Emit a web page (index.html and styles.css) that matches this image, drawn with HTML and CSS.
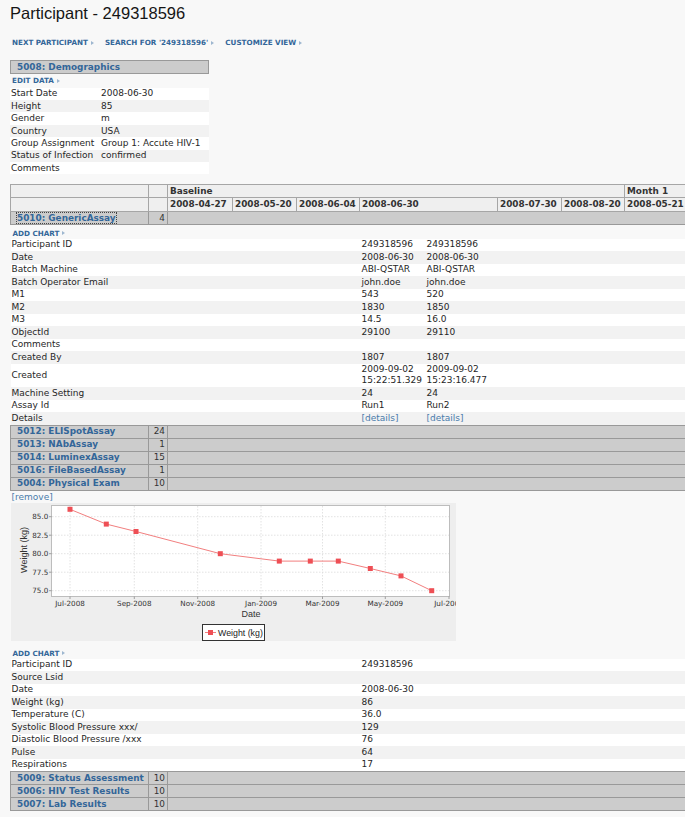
FILE: index.html
```html
<!DOCTYPE html>
<html lang="en">
<head>
<meta charset="utf-8">
<title>Participant - 249318596</title>
<link rel="stylesheet" href="styles.css">
</head>
<body>
<h1 class="page-title">Participant - 249318596</h1>

<div class="nav">
  <a class="tlink" href="#">Next Participant</a>
  <a class="tlink" href="#">Search for '249318596'</a>
  <a class="tlink" href="#">Customize View</a>
</div>

<div class="section-head"><a href="#">5008: Demographics</a></div>
<div class="action"><a class="tlink" href="#">Edit Data</a></div>
<table class="kv">
  <tr><td>Start Date</td><td>2008-06-30</td></tr>
  <tr><td>Height</td><td>85</td></tr>
  <tr><td>Gender</td><td>m</td></tr>
  <tr><td>Country</td><td>USA</td></tr>
  <tr><td>Group Assignment</td><td>Group 1: Accute HIV-1</td></tr>
  <tr><td>Status of Infection</td><td>confirmed</td></tr>
  <tr><td>Comments</td><td></td></tr>
</table>

<div class="clip">
<table class="grid">
  <colgroup>
    <col class="c-name"><col class="c-count">
    <col class="c-d1"><col class="c-d2"><col class="c-d3">
    <col class="c-d4a"><col class="c-d4b">
    <col class="c-d5"><col class="c-d6"><col class="c-d7">
  </colgroup>
  <thead>
    <tr>
      <th></th><th></th><th colspan="7">Baseline</th><th>Month 1</th>
    </tr>
    <tr>
      <th></th><th></th>
      <th>2008-04-27</th><th>2008-05-20</th><th>2008-06-04</th>
      <th colspan="2">2008-06-30</th>
      <th>2008-07-30</th><th>2008-08-20</th><th>2008-05-21</th>
    </tr>
  </thead>
  <tbody class="grp">
    <tr><td class="gname"><a class="focus" href="#">5010: GenericAssay</a></td><td class="count">4</td><td colspan="8"></td></tr>
  </tbody>
  <tbody class="act">
    <tr><td colspan="10"><a class="tlink" href="#">Add Chart</a></td></tr>
  </tbody>
  <tbody class="data">
    <tr><td colspan="5" class="label">Participant ID</td><td>249318596</td><td>249318596</td><td colspan="3"></td></tr>
    <tr><td colspan="5" class="label">Date</td><td>2008-06-30</td><td>2008-06-30</td><td colspan="3"></td></tr>
    <tr><td colspan="5" class="label">Batch Machine</td><td>ABI-QSTAR</td><td>ABI-QSTAR</td><td colspan="3"></td></tr>
    <tr><td colspan="5" class="label">Batch Operator Email</td><td>john.doe</td><td>john.doe</td><td colspan="3"></td></tr>
    <tr><td colspan="5" class="label">M1</td><td>543</td><td>520</td><td colspan="3"></td></tr>
    <tr><td colspan="5" class="label">M2</td><td>1830</td><td>1850</td><td colspan="3"></td></tr>
    <tr><td colspan="5" class="label">M3</td><td>14.5</td><td>16.0</td><td colspan="3"></td></tr>
    <tr><td colspan="5" class="label">ObjectId</td><td>29100</td><td>29110</td><td colspan="3"></td></tr>
    <tr><td colspan="5" class="label">Comments</td><td></td><td></td><td colspan="3"></td></tr>
    <tr><td colspan="5" class="label">Created By</td><td>1807</td><td>1807</td><td colspan="3"></td></tr>
    <tr><td colspan="5" class="label">Created</td><td>2009-09-02<br>15:22:51.329</td><td>2009-09-02<br>15:23:16.477</td><td colspan="3"></td></tr>
    <tr><td colspan="5" class="label">Machine Setting</td><td>24</td><td>24</td><td colspan="3"></td></tr>
    <tr><td colspan="5" class="label">Assay Id</td><td>Run1</td><td>Run2</td><td colspan="3"></td></tr>
    <tr><td colspan="5" class="label">Details</td><td><a class="plain" href="#">[details]</a></td><td><a class="plain" href="#">[details]</a></td><td colspan="3"></td></tr>
  </tbody>
  <tbody class="grp">
    <tr><td class="gname"><a href="#">5012: ELISpotAssay</a></td><td class="count">24</td><td colspan="8"></td></tr>
    <tr><td class="gname"><a href="#">5013: NAbAssay</a></td><td class="count">1</td><td colspan="8"></td></tr>
    <tr><td class="gname"><a href="#">5014: LuminexAssay</a></td><td class="count">15</td><td colspan="8"></td></tr>
    <tr><td class="gname"><a href="#">5016: FileBasedAssay</a></td><td class="count">1</td><td colspan="8"></td></tr>
    <tr><td class="gname"><a href="#">5004: Physical Exam</a></td><td class="count">10</td><td colspan="8"></td></tr>
  </tbody>
  <tbody class="remove">
    <tr><td colspan="10"><a class="plain" href="#">[remove]</a></td></tr>
  </tbody>
  <tbody class="chart-row">
    <tr><td colspan="10">
      <div class="chart">
        <svg width="445" height="138" viewBox="0 0 445 138">
          <rect x="0" y="0" width="445" height="138" fill="#eeeeee"/>
          <rect x="40.5" y="2.5" width="398" height="91" fill="#ffffff" stroke="#bdbdbd"/>
          <g stroke="#dadada" stroke-width="0.8" stroke-dasharray="1.5 1.5">
            <line x1="59" y1="3" x2="59" y2="93"/>
            <line x1="123.3" y1="3" x2="123.3" y2="93"/>
            <line x1="186.7" y1="3" x2="186.7" y2="93"/>
            <line x1="250" y1="3" x2="250" y2="93"/>
            <line x1="311.5" y1="3" x2="311.5" y2="93"/>
            <line x1="374.3" y1="3" x2="374.3" y2="93"/>
            <line x1="41" y1="13.7" x2="438" y2="13.7"/>
            <line x1="41" y1="32.2" x2="438" y2="32.2"/>
            <line x1="41" y1="50.7" x2="438" y2="50.7"/>
            <line x1="41" y1="69.2" x2="438" y2="69.2"/>
            <line x1="41" y1="87.7" x2="438" y2="87.7"/>
          </g>
          <g stroke="#8a8a8a" stroke-width="0.8">
            <line x1="59" y1="93.5" x2="59" y2="96"/>
            <line x1="123.3" y1="93.5" x2="123.3" y2="96"/>
            <line x1="186.7" y1="93.5" x2="186.7" y2="96"/>
            <line x1="250" y1="93.5" x2="250" y2="96"/>
            <line x1="311.5" y1="93.5" x2="311.5" y2="96"/>
            <line x1="374.3" y1="93.5" x2="374.3" y2="96"/>
            <line x1="438" y1="93.5" x2="438" y2="96"/>
            <line x1="38" y1="13.7" x2="40.5" y2="13.7"/>
            <line x1="38" y1="32.2" x2="40.5" y2="32.2"/>
            <line x1="38" y1="50.7" x2="40.5" y2="50.7"/>
            <line x1="38" y1="69.2" x2="40.5" y2="69.2"/>
            <line x1="38" y1="87.7" x2="40.5" y2="87.7"/>
          </g>
          <polyline fill="none" stroke="#f27f7f" stroke-width="1"
            points="59,6.3 95.3,21.1 125,28.5 209.3,50.7 268.3,58.1 299.3,58.1 327.3,58.1 359.3,65.5 390,72.9 420.7,87.7"/>
          <g fill="#ee4f55">
            <rect x="56.5" y="3.8" width="5" height="5"/>
            <rect x="92.8" y="18.6" width="5" height="5"/>
            <rect x="122.5" y="26" width="5" height="5"/>
            <rect x="206.8" y="48.2" width="5" height="5"/>
            <rect x="265.8" y="55.6" width="5" height="5"/>
            <rect x="296.8" y="55.6" width="5" height="5"/>
            <rect x="324.8" y="55.6" width="5" height="5"/>
            <rect x="356.8" y="63" width="5" height="5"/>
            <rect x="387.5" y="70.4" width="5" height="5"/>
            <rect x="418.2" y="85.2" width="5" height="5"/>
          </g>
          <g class="tick" text-anchor="end">
            <text x="37.3" y="16.2">85.0</text>
            <text x="37.3" y="34.7">82.5</text>
            <text x="37.3" y="53.2">80.0</text>
            <text x="37.3" y="71.7">77.5</text>
            <text x="37.3" y="90.2">75.0</text>
          </g>
          <g class="tick" text-anchor="middle">
            <text x="59" y="103">Jul-2008</text>
            <text x="123.3" y="103">Sep-2008</text>
            <text x="186.7" y="103">Nov-2008</text>
            <text x="250" y="103">Jan-2009</text>
            <text x="311.5" y="103">Mar-2009</text>
            <text x="374.3" y="103">May-2009</text>
            <text x="438" y="103">Jul-2009</text>
          </g>
          <text class="axis" x="240" y="114" text-anchor="middle">Date</text>
          <text class="axis" x="0" y="0" text-anchor="middle" transform="translate(15.5 47) rotate(-90)">Weight (kg)</text>
          <rect x="191.5" y="121.5" width="62" height="16" fill="#ffffff" stroke="#333333"/>
          <line x1="194" y1="129.5" x2="205" y2="129.5" stroke="#f27f7f"/>
          <rect x="197" y="127" width="5" height="5" fill="#ee4f55"/>
          <text class="legend" x="207" y="132.6">Weight (kg)</text>
        </svg>
      </div>
    </td></tr>
  </tbody>
  <tbody class="act act-gap">
    <tr><td colspan="10"><a class="tlink" href="#">Add Chart</a></td></tr>
  </tbody>
  <tbody class="data">
    <tr><td colspan="5" class="label">Participant ID</td><td>249318596</td><td colspan="4"></td></tr>
    <tr><td colspan="5" class="label">Source Lsid</td><td></td><td colspan="4"></td></tr>
    <tr><td colspan="5" class="label">Date</td><td>2008-06-30</td><td colspan="4"></td></tr>
    <tr><td colspan="5" class="label">Weight (kg)</td><td>86</td><td colspan="4"></td></tr>
    <tr><td colspan="5" class="label">Temperature (C)</td><td>36.0</td><td colspan="4"></td></tr>
    <tr><td colspan="5" class="label">Systolic Blood Pressure xxx/</td><td>129</td><td colspan="4"></td></tr>
    <tr><td colspan="5" class="label">Diastolic Blood Pressure /xxx</td><td>76</td><td colspan="4"></td></tr>
    <tr><td colspan="5" class="label">Pulse</td><td>64</td><td colspan="4"></td></tr>
    <tr><td colspan="5" class="label">Respirations</td><td>17</td><td colspan="4"></td></tr>
  </tbody>
  <tbody class="grp">
    <tr><td class="gname"><a href="#">5009: Status Assessment</a></td><td class="count">10</td><td colspan="8"></td></tr>
    <tr><td class="gname"><a href="#">5006: HIV Test Results</a></td><td class="count">10</td><td colspan="8"></td></tr>
    <tr><td class="gname"><a href="#">5007: Lab Results</a></td><td class="count">10</td><td colspan="8"></td></tr>
  </tbody>
</table>
</div>
</body>
</html>
```

FILE: styles.css
```css
* {
  box-sizing: border-box;
}

html {
  background: #f8f8f8;
}

body {
  margin: 0;
  padding: 0 0 0 10px;
  background: #f8f8f8;
  font-family: "DejaVu Sans", Verdana, sans-serif;
  font-size: 9px;
  color: #262626;
  overflow: hidden;
}

a {
  color: #336699;
  text-decoration: none;
}

.page-title {
  margin: 3.3px 0 0;
  font-family: "Liberation Sans", Arial, sans-serif;
  font-size: 16.5px;
  line-height: 20px;
  font-weight: normal;
  color: #151515;
}

/* small uppercase text links with a triangle */
.nav {
  display: flex;
  gap: 11px;
  margin-top: 15.2px;
  padding-left: 2px;
  line-height: 10px;
}

.tlink {
  display: inline-flex;
  align-items: center;
  gap: 3px;
  font-size: 7.2px;
  font-weight: bold;
  text-transform: uppercase;
  color: #336699;
}

.tlink::after {
  content: "";
  width: 0;
  height: 0;
  border-left: 3px solid #9db6cf;
  border-top: 2.5px solid transparent;
  border-bottom: 2.5px solid transparent;
}

.section-head {
  width: 199px;
  margin-top: 11.5px;
  background: #cccccc;
  border: 1px solid #999999;
  padding-left: 6px;
  line-height: 12px;
  font-weight: bold;
  font-size: 8.9px;
}

.action {
  padding-left: 2px;
  line-height: 12.7px;
}

.kv {
  width: 199px;
  border-collapse: collapse;
}

.kv td {
  padding: 0.7px 1px;
  line-height: 11px;
  white-space: nowrap;
}

.kv td:first-child {
  width: 90px;
}

.kv tr:nth-child(even) {
  background: #f2f2f2;
}

.kv tr:nth-child(odd) {
  background: #ffffff;
}

/* main grid */
.clip {
  overflow: hidden;
  margin-top: 9.5px;
}

.grid {
  border-collapse: collapse;
  table-layout: fixed;
  width: 684px;
}

.c-name { width: 138px; }
.c-count { width: 19px; }
.c-d1 { width: 65px; }
.c-d2 { width: 64px; }
.c-d3 { width: 63px; }
.c-d4a { width: 65px; }
.c-d4b { width: 73px; }
.c-d5 { width: 64px; }
.c-d6 { width: 63px; }
.c-d7 { width: 70px; }

.grid th {
  background: #efefef;
  border: 1px solid #a6a6a6;
  text-align: left;
  padding: 0.8px 2px;
  line-height: 11px;
  font-size: 8.9px;
  font-weight: bold;
  color: #333333;
  white-space: nowrap;
  overflow: hidden;
}

.grid td {
  white-space: nowrap;
}

.grp td {
  background: #cccccc;
  border-top: 1px solid #999999;
  border-bottom: 1px solid #999999;
  padding: 0.5px 2px;
  line-height: 11px;
  font-size: 8.9px;
}

.grp td.gname {
  border-left: 1px solid #999999;
  border-right: 1px solid #999999;
  padding-left: 6px;
  font-weight: bold;
  overflow: hidden;
}

.grp td.count {
  border-right: 1px solid #999999;
  text-align: right;
  padding-right: 2px;
  color: #333333;
}

.focus {
  outline: 1px dotted #444444;
}

.act td {
  padding: 2.5px 2px 0;
  line-height: 11px;
}

.act-gap td {
  padding-top: 6.5px;
}

.data td {
  padding: 0.75px 2px;
  line-height: 11px;
}

.data td.label {
  padding-left: 1px;
}

.data tr:nth-child(odd) {
  background: #ffffff;
}

.data tr:nth-child(even) {
  background: #f2f2f2;
}

.plain {
  color: #4a7cab;
}

.remove td {
  padding: 0 1px;
  line-height: 12px;
}

.chart-row td {
  padding: 0.5px 0 0;
}

.chart svg {
  display: block;
}

.tick {
  font-family: "DejaVu Sans", sans-serif;
  font-size: 7.2px;
  fill: #333333;
}

.axis {
  font-family: "Liberation Sans", Arial, sans-serif;
  font-size: 9px;
  fill: #333333;
}

.legend {
  font-family: "Liberation Sans", Arial, sans-serif;
  font-size: 8.8px;
  fill: #222222;
}
```
